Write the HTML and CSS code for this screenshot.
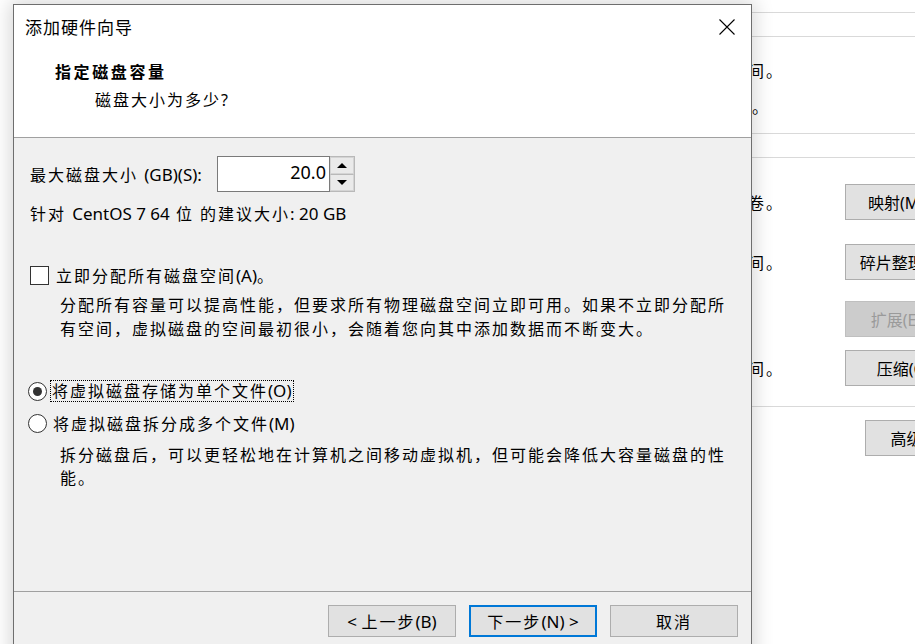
FILE: index.html
```html
<!DOCTYPE html>
<html lang="zh-CN">
<head>
<meta charset="utf-8">
<title>添加硬件向导</title>
<link rel="stylesheet" href="styles.css">
</head>
<body>
<div class="desktop">
  <div class="bgwin">
    <div class="bg-line first"></div>
    <div class="bg-line second"></div>
    <div class="bg-section">
      <div class="brow"><span class="btext">回收未用空间。</span></div>
      <div class="brow"><span class="btext short">映射本地盘。</span></div>
    </div>
    <div class="bg-line third"></div>
    <div class="bg-line fourth"></div>
    <div class="brow r1"><span class="btext">映射到本地卷。</span><span class="bbtn">映射(M)...</span></div>
    <div class="brow r2"><span class="btext">增加可用空间。</span><span class="bbtn">碎片整理(D)</span></div>
    <div class="brow r3"><span class="btext"></span><span class="bbtn disabled">扩展(E)...</span></div>
    <div class="brow r4"><span class="btext">回收未用空间。</span><span class="bbtn">压缩(C)</span></div>
    <div class="bg-line fifth"></div>
    <div class="brow r5"><span class="btext"></span><span class="bbtn adv">高级(V)...</span></div>
  </div>

  <div class="dialog">
    <div class="titlebar">
      <span class="title">添加硬件向导</span>
      <svg class="close" width="16" height="16" viewBox="0 0 16 16"><path d="M0.5 0.5 L15.5 15.5 M15.5 0.5 L0.5 15.5" stroke="#000" stroke-width="1.1" fill="none"/></svg>
    </div>
    <div class="header">
      <div class="h-title">指定磁盘容量</div>
      <div class="h-sub">磁盘大小为多少<span class="lat">?</span></div>
    </div>
    <div class="body">
      <div class="spin-row">
        <span class="spin-label">最大磁盘大小 <span class="lat">(GB)(S):</span></span>
        <div class="spin">
          <div class="spin-input">20.0</div>
          <div class="spin-btns">
            <span class="sbtn"><span class="tri-up"></span></span>
            <span class="sbtn"><span class="tri-down"></span></span>
          </div>
        </div>
      </div>
      <div class="rec">针对 <span class="lat">CentOS 7 64</span> 位 的建议大小<span class="lat">: 20 GB</span></div>

      <div class="opt check-row">
        <span class="checkbox"></span>
        <span class="opt-label">立即分配所有磁盘空间<span class="lat">(A)</span>。</span>
      </div>
      <p class="desc">分配所有容量可以提高性能，但要求所有物理磁盘空间立即可用。如果不立即分配所有空间，虚拟磁盘的空间最初很小，会随着您向其中添加数据而不断变大。</p>

      <div class="opt radio-row1">
        <span class="radio checked"></span>
        <span class="opt-label focus">将虚拟磁盘存储为单个文件<span class="lat">(O)</span></span>
      </div>
      <div class="opt radio-row2">
        <span class="radio"></span>
        <span class="opt-label">将虚拟磁盘拆分成多个文件<span class="lat">(M)</span></span>
      </div>
      <p class="desc desc2">拆分磁盘后，可以更轻松地在计算机之间移动虚拟机，但可能会降低大容量磁盘的性能。</p>
    </div>
    <div class="footer">
      <button class="btn"><span class="btxt"><span class="lat">&lt;&nbsp;</span>上一步<span class="lat">(B)</span></span></button>
      <button class="btn primary"><span class="btxt">下一步<span class="lat">(N)&nbsp;&gt;</span></span></button>
      <button class="btn"><span class="btxt">取消</span></button>
    </div>
  </div>
</div>
</body>
</html>
```

FILE: styles.css
```css
html, body {
  margin: 0;
  padding: 0;
  background: #ffffff;
  overflow: hidden;
}
body {
  width: 915px;
  height: 644px;
  font-family: "Noto Sans", "Noto Sans CJK SC", sans-serif;
  color: #000;
}
.desktop {
  position: relative;
  width: 915px;
  height: 644px;
  overflow: hidden;
}

/* background window */
.bgwin {
  margin-left: 600px;
  width: 420px;
  padding-top: 12px;
  font-size: 16px;
  letter-spacing: 2px;
}
.bg-line {
  height: 0;
  border-top: 1px solid #d9d9d9;
}
.bg-line.second { margin-top: 23px; }
.bg-section { padding-top: 15px; height: 81px; }
.bg-line.fourth { margin-top: 23px; }
.brow {
  display: grid;
  grid-template-columns: 184px 61px 115px;
  height: 36px;
  align-items: center;
  white-space: nowrap;
}
.btext {
  text-align: right;
}
.btext.short { padding-right: 14px; }
.brow.r1 { margin-top: 26px; }
.brow.r2 { margin-top: 24px; }
.brow.r3 { margin-top: 21px; }
.brow.r4 { margin-top: 13px; }
.bg-line.fifth { margin-top: 20px; }
.brow.r5 { margin-top: 13px; grid-template-columns: 184px 81px 115px; }
.bbtn {
  grid-column: 3;
  height: 36px;
  box-sizing: border-box;
  border: 1px solid #adadad;
  background: #e1e1e1;
  display: flex;
  align-items: center;
  justify-content: center;
  letter-spacing: 0;
}
.bbtn.disabled {
  background: #cccccc;
  border-color: #bfbfbf;
  color: #9a9a9a;
}

/* dialog */
.dialog {
  position: absolute;
  left: 13px;
  top: 4px;
  width: 739px;
  height: 700px;
  box-sizing: border-box;
  border: 1px solid #6e6e6e;
  background: #f0f0f0;
  box-shadow: 0 0 18px 3px rgba(0, 0, 0, 0.16);
  display: flex;
  flex-direction: column;
}
.lat { letter-spacing: 0; }
.body .lat, .footer .lat { font-size: 17px; }
.titlebar {
  height: 42px;
  background: #fff;
  display: flex;
  align-items: center;
  justify-content: space-between;
  padding: 0 16px 0 11px;
  flex: 0 0 auto;
}
.title {
  font-size: 17px;
  letter-spacing: 1px;
}
.close { display: block; margin-top: 1px; }
.header {
  background: #fff;
  height: 90px;
  border-bottom: 1px solid #a0a0a0;
  padding-left: 41px;
  flex: 0 0 auto;
}
.h-title {
  margin-top: 13px;
  line-height: 24px;
  font-size: 16px;
  font-weight: 700;
  letter-spacing: 2.6px;
}
.h-sub {
  margin-top: 4px;
  padding-left: 40px;
  line-height: 24px;
  font-size: 16px;
  letter-spacing: 2px;
}
.body {
  height: 453px;
  box-sizing: border-box;
  padding: 18px 16px 0 16px;
  font-size: 16px;
  letter-spacing: 2px;
  flex: 0 0 auto;
}
.spin-row {
  display: flex;
  align-items: center;
  height: 36px;
}
.spin-label {
  flex: 0 0 187px;
  letter-spacing: 2px;
  white-space: nowrap;
}
.spin {
  display: flex;
  height: 36px;
}
.spin-input {
  width: 113px;
  height: 36px;
  box-sizing: border-box;
  border: 1px solid #7a7a7a;
  background: #fff;
  text-align: right;
  padding-right: 3px;
  font-size: 18px;
  line-height: 30px;
  letter-spacing: 0;
}
.spin-btns {
  width: 25px;
  height: 36px;
  box-sizing: border-box;
  border: 1px solid #b9b9b9;
  border-left: none;
  display: flex;
  flex-direction: column;
  background: #e9e9e9;
}
.sbtn {
  flex: 1;
  display: flex;
  align-items: center;
  justify-content: center;
  border: 1px solid #d4d4d4;
  background: #eaeaea;
}
.sbtn + .sbtn { border-top-color: #b9b9b9; }
.tri-up {
  width: 0; height: 0;
  border-left: 5px solid transparent;
  border-right: 5px solid transparent;
  border-bottom: 5px solid #000;
}
.tri-down {
  width: 0; height: 0;
  border-left: 5px solid transparent;
  border-right: 5px solid transparent;
  border-top: 5px solid #000;
}
.rec {
  margin-top: 10px;
  line-height: 24px;
  letter-spacing: 2px;
}
.opt {
  display: flex;
  align-items: center;
  height: 24px;
}
.check-row { margin-top: 37px; }
.checkbox {
  width: 19px;
  height: 19px;
  box-sizing: border-box;
  border: 1px solid #333;
  background: #fff;
  margin-right: 7px;
  flex: 0 0 auto;
}
.desc {
  margin: 6px 0 0 30px;
  line-height: 24px;
}
.radio-row1 { margin-top: 38px; }
.radio-row2 { margin-top: 8px; }
.radio {
  width: 19px;
  height: 19px;
  box-sizing: border-box;
  border: 1px solid #333;
  border-radius: 50%;
  background: #fff;
  margin-left: -2px;
  margin-right: 6px;
  flex: 0 0 auto;
  display: flex;
  align-items: center;
  justify-content: center;
}
.radio.checked::after {
  content: "";
  width: 9px;
  height: 9px;
  border-radius: 50%;
  background: #333;
}
.opt-label.focus {
  outline: 1px dotted #000;
  outline-offset: 0;
  line-height: 19px;
  padding: 0 1px;
  margin-left: -2px;
}
.desc2 {
  margin-top: 9px;
  line-height: 23px;
}
.footer {
  border-top: 1px solid #a0a0a0;
  padding: 13px 13px 0 0;
  display: flex;
  justify-content: flex-end;
  gap: 13px;
  flex: 1 1 auto;
}
.btn {
  width: 128px;
  height: 32px;
  box-sizing: border-box;
  border: 1px solid #adadad;
  background: #e1e1e1;
  font-family: "Noto Sans", "Noto Sans CJK SC", sans-serif;
  font-size: 16px;
  letter-spacing: 2px;
  color: #000;
  padding: 0;
  display: flex;
  align-items: center;
  justify-content: center;
}
.btxt { white-space: nowrap; }
.btn.primary {
  border: 2px solid #0078d7;
}
```
